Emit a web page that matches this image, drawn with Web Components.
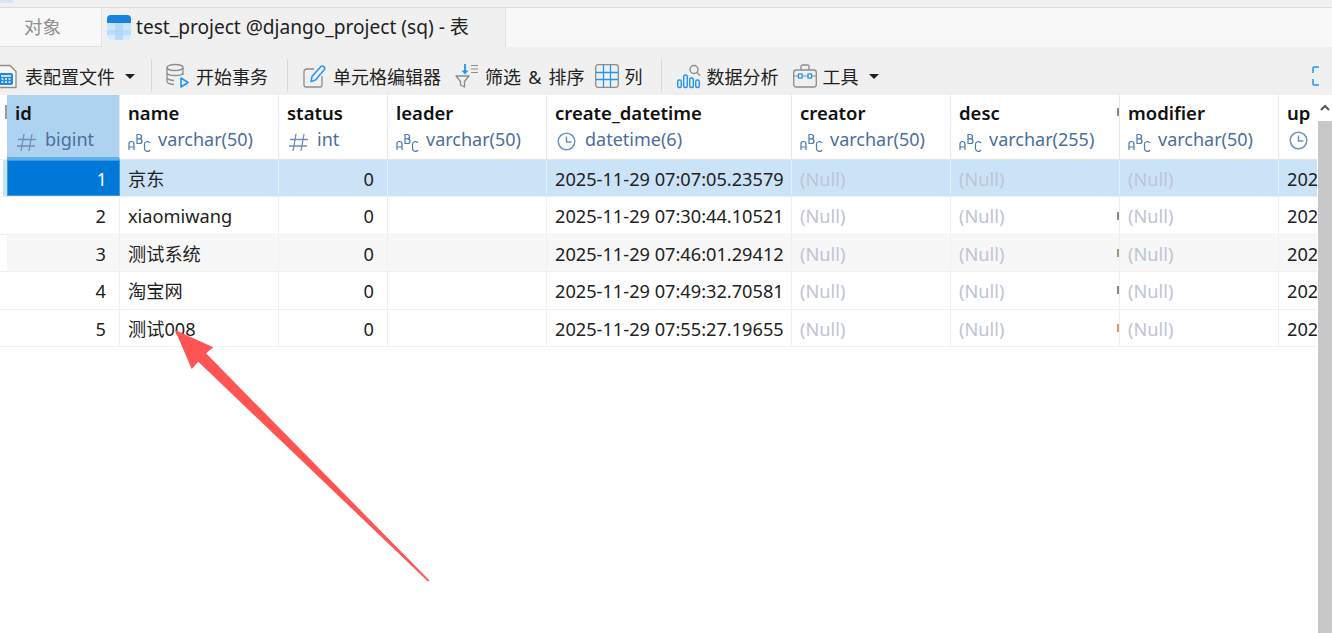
<!DOCTYPE html>
<html>
<head>
<meta charset="utf-8">
<title>test_project</title>
<style>
  html, body { margin: 0; background: #fff; }
  body { font-family: "Noto Sans", "Noto Sans CJK SC", sans-serif; }
</style>
</head>
<body>
<app-shell>
  <tab-bar>
    <tab-item>对象</tab-item>
    <tab-item active>
      <svg slot="icon" width="24" height="25" viewBox="0 0 24 25">
        <defs><linearGradient id="tb" x1="0" y1="0" x2="0" y2="1"><stop offset="0" stop-color="#bfe0fa"/><stop offset="1" stop-color="#d9edfc"/></linearGradient></defs>
        <rect x="0" y="0" width="24" height="25" rx="4" fill="url(#tb)"/>
        <path d="M0 8V4a4 4 0 0 1 4-4h16a4 4 0 0 1 4 4v4z" fill="#1684dc"/>
        <path d="M8 8h8v17H8z" fill="#a9d4f7" opacity=".7"/>
        <path d="M0 15h24v5H0z" fill="#a9d4f7" opacity=".55"/>
      </svg>
      test_project @django_project (sq) - 表
    </tab-item>
  </tab-bar>
  <tool-bar>
    <tool-btn style="margin-left:-3px" gap="6" caret>
      <svg slot="icon" width="22" height="26" viewBox="0 0 22 26" fill="none">
        <path d="M2 24.500V2.500h11l6 6v16z" fill="#f7f7f7" stroke="#8c8c8c" stroke-width="1.300"/>
        <rect x="2" y="10" width="14" height="12" rx="2" fill="#1e88e5"/>
        <path d="M4 13h10M4.500 16h2M8 16h2M11.500 16h2M4.500 19h2M8 19h2M11.500 19h2" stroke="#fff" stroke-width="1.500"/>
      </svg>
      表配置文件
    </tool-btn>
    <tool-sep style="margin-left:16px"></tool-sep>
    <tool-btn style="margin-left:14px" gap="7">
      <svg slot="icon" width="23" height="26" viewBox="0 0 23 26" fill="none" stroke="#8c8c8c" stroke-width="1.300">
        <ellipse cx="9" cy="4.500" rx="8" ry="3"/>
        <path d="M1 4.500v14c0 1.700 3.500 3 7 3M17 4.500V12M1 9.500c0 1.700 3.500 3 8 3s8-1.300 8-3M1 14.500c0 1.700 3.500 3 7 3"/>
        <path d="M15 15v9l7-4.500z" stroke="#2196f3" stroke-width="1.600" stroke-linejoin="round"/>
      </svg>
      开始事务
    </tool-btn>
    <tool-sep style="margin-left:19px"></tool-sep>
    <tool-btn style="margin-left:15px" gap="7">
      <svg slot="icon" width="23" height="26" viewBox="0 0 23 26" fill="none">
        <path d="M11 6H4a3 3 0 0 0-3 3v13a2 2 0 0 0 2 2h14a2 2 0 0 0 2-2V13" stroke="#8c8c8c" stroke-width="1.300"/>
        <path d="M8 18.500l1-5L18 3.500a1.800 1.800 0 0 1 2.600 0l.6.6a1.800 1.800 0 0 1 0 2.600L12.500 17z" stroke="#2196f3" stroke-width="1.500" stroke-linejoin="round"/>
      </svg>
      单元格编辑器
    </tool-btn>
    <tool-btn style="margin-left:14px;word-spacing:2.500px" gap="6">
      <svg slot="icon" width="24" height="26" viewBox="0 0 24 26" fill="none">
        <path d="M1 13h13l-4.500 5.500V24l-4-2v-3.500z" stroke="#8c8c8c" stroke-width="1.300" stroke-linejoin="round"/>
        <path d="M10 1v9" stroke="#2196f3" stroke-width="1.800"/>
        <path d="M6.500 7.500L10 11.500l3.500-4z" fill="#2196f3"/>
        <path d="M16 2.500h7M16 6h7M16 9.500h7" stroke="#8c8c8c" stroke-width="1.200"/>
      </svg>
      筛选 &amp; 排序
    </tool-btn>
    <tool-btn style="margin-left:10px" gap="6">
      <svg slot="icon" width="24" height="24" viewBox="0 0 24 24" fill="none">
        <rect x=".7" y=".7" width="22.600" height="22.600" rx="2.500" stroke="#8c8c8c" stroke-width="1.300"/>
        <path d="M8.500 1v22M15.500 1v22M1 8.500h22M1 15.500h22" stroke="#2196f3" stroke-width="1.300"/>
      </svg>
      列
    </tool-btn>
    <tool-sep style="margin-left:18px"></tool-sep>
    <tool-btn style="margin-left:15px" gap="6">
      <svg slot="icon" width="24" height="26" viewBox="0 0 24 26" fill="none" stroke="#2196f3" stroke-width="1.400">
        <rect x=".7" y="17" width="3.600" height="7.500" rx="1.500"/>
        <rect x="6.700" y="12" width="3.600" height="12.500" rx="1.500"/>
        <rect x="12.700" y="15" width="3.600" height="9.500" rx="1.500"/>
        <rect x="18.700" y="17" width="3.600" height="7.500" rx="1.500"/>
        <circle cx="17" cy="6.500" r="4" stroke="#8c8c8c"/>
        <path d="M20 9.500l3 3" stroke="#8c8c8c"/>
      </svg>
      数据分析
    </tool-btn>
    <tool-btn style="margin-left:14px" gap="6" caret>
      <svg slot="icon" width="24" height="24" viewBox="0 0 24 24" fill="none">
        <rect x=".7" y="6" width="22.600" height="17" rx="2.500" stroke="#8c8c8c" stroke-width="1.300"/>
        <path d="M8 6V2.500A1.500 1.500 0 0 1 9.500 1h5A1.500 1.500 0 0 1 16 2.500V6" stroke="#8c8c8c" stroke-width="1.300"/>
        <path d="M1 12h22" stroke="#8c8c8c" stroke-width="1"/>
        <rect x="5.500" y="10" width="3.500" height="4" fill="#fff" stroke="#2196f3" stroke-width="1.300"/>
        <rect x="15" y="10" width="3.500" height="4" fill="#fff" stroke="#2196f3" stroke-width="1.300"/>
      </svg>
      工具
    </tool-btn>
    <svg style="margin-left:auto;margin-right:-12px;flex:none" width="32" height="20" viewBox="0 0 32 20" fill="none" stroke="#2196f3" stroke-width="1.500">
      <path d="M1 7V2a1 1 0 0 1 1-1h5M1 13v5a1 1 0 0 0 1 1h5M25 1h5a1 1 0 0 1 1 1v5M25 19h5a1 1 0 0 0 1-1v-5"/>
    </svg>
  </tool-bar>
  <grid-area>
    <db-grid id="grid"></db-grid>
    <scroll-bar></scroll-bar>
  </grid-area>
  <svg slot="overlay" width="1332" height="633" viewBox="0 0 1332 633">
    <path d="M175 330L213.300 347.300L206 353.300L429.500 580.500L428 581.500L198.300 361.700L191.700 369z" fill="#ff5454"/>
  </svg>
</app-shell>

<script>
const tabBarTemplate = document.createElement("template");
tabBarTemplate.innerHTML = `
  <style>
    :host { display: flex; height: 40px; box-sizing: border-box; margin-top: 7px; border-top: 1px solid #dcdcdc; background: #f8f8f8; }
  </style>
  <slot></slot>`;

const tabItemTemplate = document.createElement("template");
tabItemTemplate.innerHTML = `
  <style>
    :host { display: flex; align-items: center; justify-content: center; gap: 5px; flex: none; box-sizing: border-box; width: 102px; padding: 0 16px 3px 0; color: #8f8f8f; font-size: 18.500px; border-right: 1px solid #e2e2e2; border-bottom: 1px solid #e2e2e2; white-space: nowrap; }
    :host([active]) { width: 404px; padding: 0 0 3px 5px; justify-content: flex-start; background: #f0f0f0; color: #222; font-size: 19.100px; border-bottom: 0; }
    ::slotted(svg) { flex: none; margin-top: 3px; }
  </style>
  <slot name="icon"></slot><slot></slot>`;

const toolBarTemplate = document.createElement("template");
toolBarTemplate.innerHTML = `
  <style>
    :host { display: flex; align-items: center; height: 48px; padding-top: 9px; box-sizing: border-box; background: #f0f0f0; overflow: hidden; }
  </style>
  <slot></slot>`;

const toolBtnTemplate = document.createElement("template");
toolBtnTemplate.innerHTML = `
  <style>
    :host { display: flex; align-items: center; flex: none; color: #222; font-size: 18px; white-space: nowrap; }
    ::slotted(svg) { flex: none; display: block; }
    .caret { display: none; width: 0; height: 0; margin-left: 10px; margin-top: 2px; border: 5px solid transparent; border-top-color: #222; border-bottom: 0; }
    :host([caret]) .caret { display: block; }
  </style>
  <slot name="icon"></slot><span id="label"><slot></slot></span><span class="caret"></span>`;

const toolSepTemplate = document.createElement("template");
toolSepTemplate.innerHTML = `
  <style>
    :host { display: block; flex: none; width: 1px; height: 33px; background: #d8d8d8; }
  </style>`;

const gridAreaTemplate = document.createElement("template");
gridAreaTemplate.innerHTML = `
  <style>
    :host { display: flex; flex: 1; min-height: 0; background: #fff; }
  </style>
  <slot></slot>`;

const scrollBarTemplate = document.createElement("template");
scrollBarTemplate.innerHTML = `
  <style>
    :host { display: flex; flex-direction: column; flex: none; width: 14px; margin-left: 1px; }
    .up { flex: none; height: 26px; display: flex; justify-content: center; padding-top: 9px; box-sizing: border-box; }
    .thumb { flex: 1; background: #c8c8c8; }
  </style>
  <div class="up"><svg width="10" height="7" viewBox="0 0 10 7"><path d="M1 6l4-4 4 4" fill="none" stroke="#555" stroke-width="2"/></svg></div>
  <div class="thumb"></div>`;

const dbGridTemplate = document.createElement("template");
dbGridTemplate.innerHTML = `
  <style>
    :host { display: grid; flex: 1; min-width: 0; align-content: start; overflow: hidden;
      grid-template-columns: 7px 113px 159px 109px 159px 245px 159px 169px 159px 38px;
      grid-template-rows: 65px repeat(5, 37.400px); }
  </style>
  <slot></slot>`;

const headCellTemplate = document.createElement("template");
headCellTemplate.innerHTML = `
  <style>
    :host { display: block; box-sizing: border-box; padding: 5px 8px 0 8px; overflow: hidden; background-color: #fff; background-repeat: no-repeat; border-right: 1.500px solid #e8e8e8; border-bottom: 1px solid #e4e4e4; white-space: nowrap; }
    :host([picked]) { background-color: #aed3f0; border-bottom: 3px solid #62aee8; }
    :host([flush]) { padding-right: 0; border-right: 0; }
    .name { font-size: 18.500px; font-weight: 600; line-height: 26px; color: #111; }
    .type { display: flex; align-items: center; font-size: 18px; line-height: 26px; color: #4a6f9c; }
    .ic { flex: none; width: 30px; }
    svg { display: block; margin-top: 5px; }
  </style>
  <div class="name"></div>
  <div class="type"><span class="ic"></span><span class="tx"></span></div>`;

const gridCellTemplate = document.createElement("template");
gridCellTemplate.innerHTML = `
  <style>
    :host { display: block; box-sizing: border-box; padding: 2px 8px 0; background-color: #fff; background-repeat: no-repeat; border-right: 1.500px solid #f0f0f0; border-bottom: 1px solid #f0f0f0; font-size: 18.200px; line-height: 34px; color: #222; }
    :host([flush]) { padding-right: 0; border-right: 0; }
    .clip { overflow: hidden; white-space: nowrap; }
    :host([right]) { padding-right: 13px; }
    :host([right]) .clip { text-align: right; }
    :host([tone="sel"]) { background-color: #cbe3f7; border-color: #e4f0fa; }
    :host([tone="alt"]) { background-color: #f7f7f7; }
    :host([tone="cur"]) { background-color: #0078d7; color: #fff; border-right: 0; box-shadow: inset 0 0 0 1px #3d9be6; }
    :host([empty]) { color: #c0c4d6; }
    :host([gutter]) { background-color: #fff; }
    :host([gutter][tone="sel"]) { background: linear-gradient(90deg, #fff 3px, #cbe3f7 3px); }
  </style>
  <div class="clip"><slot></slot></div>`;

const iconMarkup = {
  num: `<svg width="21" height="20" viewBox="0 0 21 20" fill="none" stroke="#6f8fb3" stroke-width="1.300"><path d="M9 2L6 19M17 2l-3 17M3 7.500h18M2 14h18"/></svg>`,
  abc: `<svg width="24" height="20" viewBox="0 0 24 20" fill="none" stroke="#4a78ad" stroke-width="1.200"><path d="M1 18v-6a2.500 2.500 0 0 1 5 0v6M1 15h5"/><path d="M9 2.500v9h2.700a2.300 2.300 0 0 0 0-4.600H9h2.300a2.200 2.200 0 0 0 0-4.400z"/><path d="M22 11a3 3 0 0 0-5.500 2v3a3 3 0 0 0 5.500 2"/></svg>`,
  time: `<svg width="21" height="19" viewBox="0 0 21 19" fill="none" stroke="#6f93ba" stroke-width="1.500"><circle cx="11.500" cy="9.500" r="8.300"/><path d="M11.500 4.500v5.500h5"/></svg>`
};

// Same pattern for every element: clone the template into an open shadow root.
function defineSimple(tag, template) {
  customElements.define(tag, class extends HTMLElement {
    constructor() {
      super();
      this.attachShadow({ mode: "open" }).appendChild(template.content.cloneNode(true));
    }
  });
}

customElements.define("app-shell", class AppShell extends HTMLElement {
  constructor() {
    super();
    this.attachShadow({ mode: "open" }).innerHTML = `
      <style>
        :host { display: flex; flex-direction: column; position: relative; width: 1332px; height: 633px; overflow: hidden; background: #f0f0f0; }
        .overlay { position: absolute; inset: 0; pointer-events: none; }
        .strip { position: absolute; left: 0; top: 0; width: 13px; height: 3px; background: #d3e6f6; }
      </style>
      <div class="strip"></div>
      <slot></slot>
      <div class="overlay"><slot name="overlay"></slot></div>`;
  }
});

defineSimple("tab-bar", tabBarTemplate);
defineSimple("tab-item", tabItemTemplate);
defineSimple("tool-bar", toolBarTemplate);
defineSimple("tool-sep", toolSepTemplate);
defineSimple("grid-area", gridAreaTemplate);
defineSimple("scroll-bar", scrollBarTemplate);
defineSimple("grid-cell", gridCellTemplate);

customElements.define("tool-btn", class ToolBtn extends HTMLElement {
  constructor() {
    super();
    this.attachShadow({ mode: "open" }).appendChild(toolBtnTemplate.content.cloneNode(true));
  }
  connectedCallback() {
    this.shadowRoot.getElementById("label").style.marginLeft = (this.getAttribute("gap") || 6) + "px";
  }
});

customElements.define("head-cell", class HeadCell extends HTMLElement {
  constructor() {
    super();
    this.attachShadow({ mode: "open" }).appendChild(headCellTemplate.content.cloneNode(true));
  }
  connectedCallback() {
    const root = this.shadowRoot;
    root.querySelector(".name").textContent = this.getAttribute("name");
    root.querySelector(".tx").textContent = this.getAttribute("type");
    root.querySelector(".ic").innerHTML = iconMarkup[this.getAttribute("kind")];
  }
});

customElements.define("db-grid", class DbGrid extends HTMLElement {
  constructor() {
    super();
    this.attachShadow({ mode: "open" }).appendChild(dbGridTemplate.content.cloneNode(true));
  }
  connectedCallback() {
    const columns = [
      ["id", "bigint", "num"],
      ["name", "varchar(50)", "abc"],
      ["status", "int", "num"],
      ["leader", "varchar(50)", "abc"],
      ["create_datetime", "datetime(6)", "time"],
      ["creator", "varchar(50)", "abc"],
      ["desc", "varchar(255)", "abc"],
      ["modifier", "varchar(50)", "abc"],
      ["up", "", "time"]
    ];
    const rows = [
      ["1", "京东", "0", "", "2025-11-29 07:07:05.23579"],
      ["2", "xiaomiwang", "0", "", "2025-11-29 07:30:44.10521"],
      ["3", "测试系统", "0", "", "2025-11-29 07:46:01.29412"],
      ["4", "淘宝网", "0", "", "2025-11-29 07:49:32.70581"],
      ["5", "测试008", "0", "", "2025-11-29 07:55:27.19655"]
    ];
    // Bits of the squeezed column that still show at the right edge of desc.
    const slivers = ["", "#8a8a8a", "#9a9a80", "#7d8a8a", "#d9985a"];
    const setSliver = (cell, color, pos, h) => {
      cell.style.backgroundImage = `linear-gradient(${color}, ${color})`;
      cell.style.backgroundPosition = pos;
      cell.style.backgroundSize = `2px ${h}px`;
    };

    const gutterHead = document.createElement("grid-cell");
    setSliver(gutterHead, "#999", "5px 10px", 14);
    this.appendChild(gutterHead);
    columns.forEach((col, i) => {
      const cell = document.createElement("head-cell");
      cell.setAttribute("name", col[0]);
      cell.setAttribute("type", col[1]);
      cell.setAttribute("kind", col[2]);
      if (i === 0) cell.setAttribute("picked", "");
      if (col[0] === "up") cell.setAttribute("flush", "");
      if (col[0] === "desc") setSliver(cell, "#8a8a8a", "right 0 top 13px", 8);
      this.appendChild(cell);
    });

    rows.forEach((row, r) => {
      const tone = r === 0 ? "sel" : (r === 2 ? "alt" : "");
      const add = (text, attrs) => {
        const cell = document.createElement("grid-cell");
        cell.textContent = text;
        if (tone) cell.setAttribute("tone", tone);
        Object.keys(attrs || {}).forEach(k => cell.setAttribute(k, attrs[k]));
        this.appendChild(cell);
        return cell;
      };
      add("", { gutter: "" });
      add(row[0], r === 0 ? { right: "", tone: "cur" } : { right: "" });
      add(row[1]);
      add(row[2], { right: "" });
      add(row[3]);
      add(row[4]);
      add("(Null)", { empty: "" });
      const desc = add("(Null)", { empty: "" });
      if (slivers[r]) setSliver(desc, slivers[r], "right 0 center", 8);
      add("(Null)", { empty: "" });
      add("202", { flush: "" });
    });
  }
});
</script>
</body>
</html>
